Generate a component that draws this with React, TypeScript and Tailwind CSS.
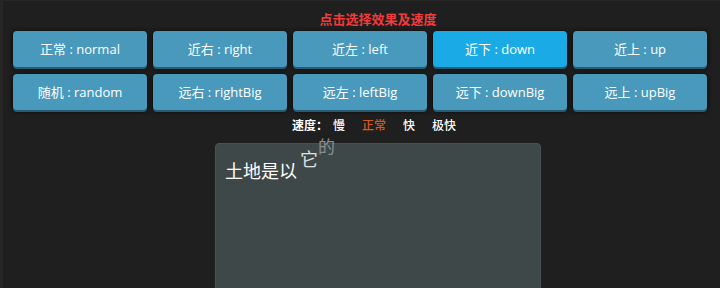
const effects = [
  ["正常", "normal"],
  ["近右", "right"],
  ["近左", "left"],
  ["近下", "down"],
  ["近上", "up"],
  ["随机", "random"],
  ["远右", "rightBig"],
  ["远左", "leftBig"],
  ["远下", "downBig"],
  ["远上", "upBig"],
];

const speeds = ["慢", "正常", "快", "极快"];

export default function App() {
  return (
    <div
      className="w-[720px] h-[288px] overflow-hidden bg-[#1f1f1f] border-l-[3px] border-t-[1px] border-[#262626]"
      style={{ fontFamily: "'Open Sans', 'Noto Sans CJK SC', sans-serif" }}
    >
      {/* 标题 */}
      <div className="pt-[9px] pl-[33px] text-center text-[13px] leading-[18px] font-bold text-[#f23b3b]">
        点击选择效果及速度
      </div>

      {/* 效果按钮 */}
      <div className="grid grid-cols-5 gap-x-[6px] gap-y-[7px] pl-[10px] pr-[13px] mt-[3px]">
        {effects.map(([cn, en], i) => (
          <button
            key={i}
            className={`h-[36px] rounded-[4px] text-white text-[13px] leading-none shadow-[0_2px_0_#275d74,0_1px_5px_rgba(0,0,0,0.95)] ${
              i === 3 ? "bg-[#1aaae6]" : "bg-[#4899bb]"
            }`}
          >
            {cn} : {en}
          </button>
        ))}
      </div>

      {/* 速度 */}
      <div className="flex items-center mt-[8px] ml-[289px] text-[12px] leading-[16px] text-white font-medium">
        <span className="font-bold mr-[5px]">速度：</span>
        <div className="flex gap-x-[17px]">
          {speeds.map((s, i) => (
            <span key={i} className={i === 1 ? "text-[#d9581c]" : "text-white"}>
              {s}
            </span>
          ))}
        </div>
      </div>

      {/* 文字区 */}
      <div className="relative ml-[212px] mt-[9px] w-[326px] h-[160px] rounded-t-[4px] bg-[#3f4848] border border-[#485252]">
        <div className="absolute left-[9px] top-[16px] text-[18px] leading-[22px] text-white">土地是以</div>
        <div className="absolute left-[84px] top-[4px] text-[18px] leading-[22px] text-[#e0e0e0]">它</div>
        <div className="absolute left-[102px] top-[-8px] text-[17px] leading-[22px] text-[#8a8f8f]">的</div>
      </div>
    </div>
  );
}
